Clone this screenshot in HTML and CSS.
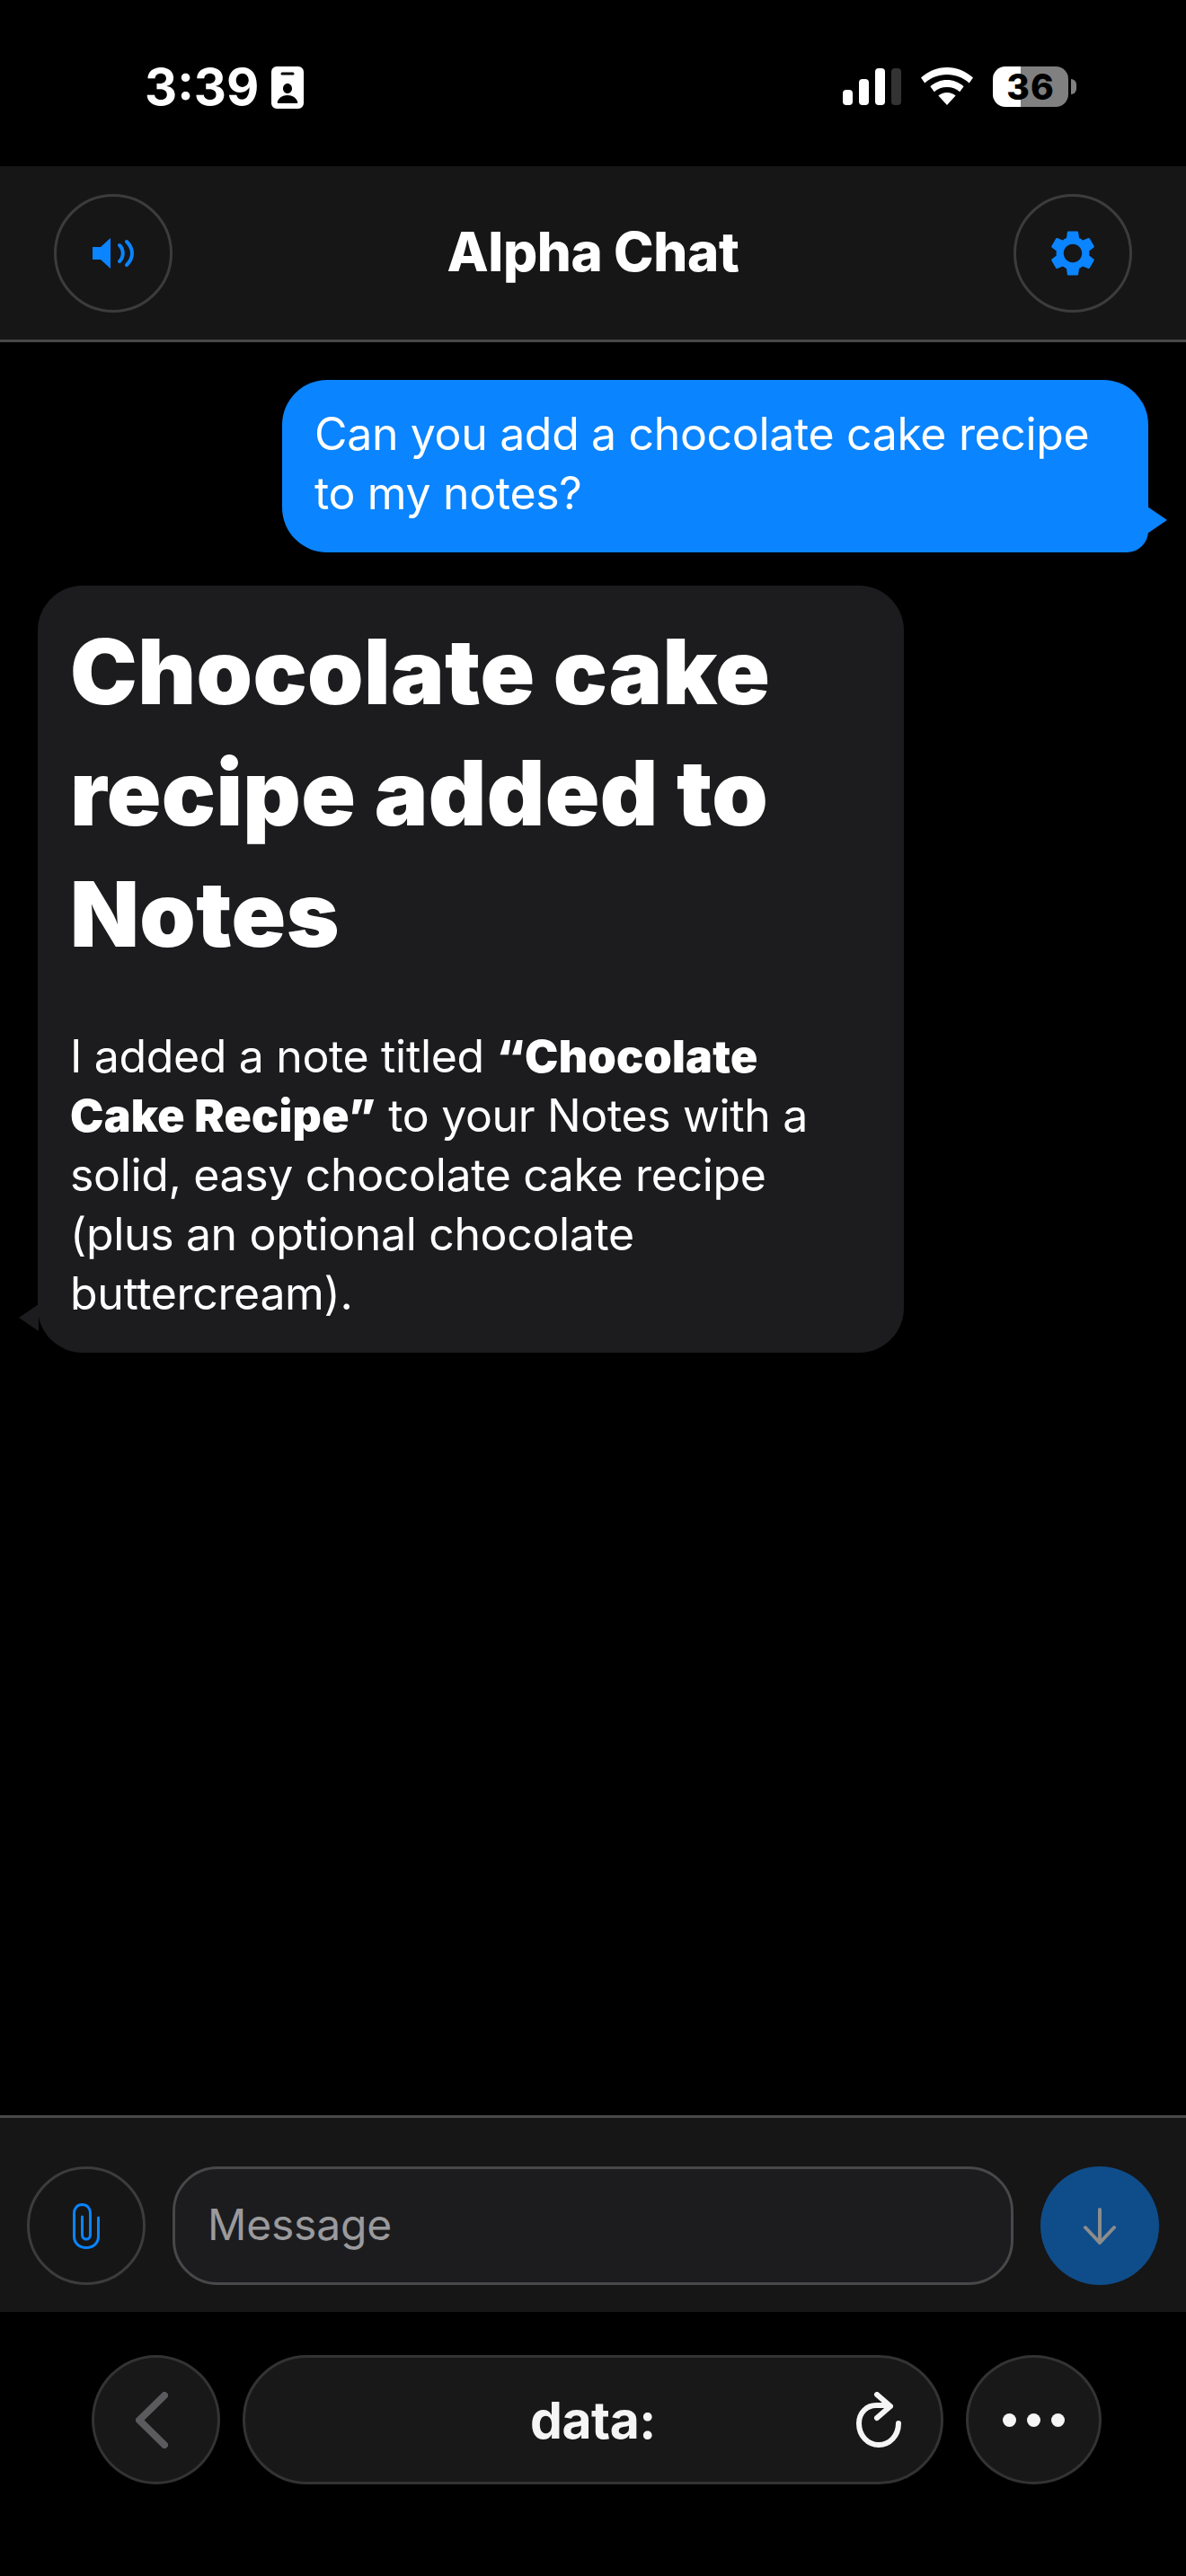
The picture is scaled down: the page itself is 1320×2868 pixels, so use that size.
FILE: index.html
```html
<!DOCTYPE html>
<html>
<head>
	<title>Alpha Chat</title>
	<meta charset="utf-8">
	<link rel="stylesheet" href="styles.css">
</head>
<body>
    <div class="status-bar">
        <div class="status-left">
            <span class="clock">3:39</span>
            <svg class="id-icon" viewBox="0 0 36 47">
                <path fill-rule="evenodd" fill="#fff" d="M6 0h24a6 6 0 0 1 6 6v35a6 6 0 0 1-6 6H6a6 6 0 0 1-6-6V6a6 6 0 0 1 6-6zM12 6.500a1.500 1.500 0 0 0 0 3h12a1.500 1.500 0 0 0 0-3zM18 19c-3 0-5 2.500-5 5.500s2 5.500 5 5.500 5-2.500 5-5.500-2-5.500-5-5.500zM8 41h20c1 0 1.500-.6 1.300-1.500C28 35 23.500 32 18 32S8 35 6.700 39.500C6.500 40.400 7 41 8 41z"/>
            </svg>
        </div>
        <div class="status-right">
            <div class="signal">
                <span class="bar bar-1"></span>
                <span class="bar bar-2"></span>
                <span class="bar bar-3"></span>
                <span class="bar bar-4"></span>
            </div>
            <svg class="wifi-icon" viewBox="0 0 58 42">
                <path fill="#fff" d="M29 0c11 0 21 4.300 29 11.500l-4.300 6C47 11.500 38.500 8 29 8S11 11.500 4.300 17.500L0 11.500C8 4.300 18 0 29 0z"/>
                <path fill="#fff" d="M29 14c7 0 13.500 2.700 18.600 7.200l-4.400 6C39.400 23.900 34.500 22 29 22s-10.400 1.900-14.200 5.200l-4.400-6C15.500 16.700 22 14 29 14z"/>
                <path fill="#fff" d="M29 28c3.700 0 7 1.300 9.600 3.500L29 42l-9.600-10.500C22 29.300 25.300 28 29 28z"/>
            </svg>
            <div class="battery">
                <div class="battery-body"><span class="battery-level">36</span></div>
                <span class="battery-nub"></span>
            </div>
        </div>
    </div>

    <header class="app-header">
        <button class="round-btn">
            <svg class="speaker-icon" viewBox="0 0 46 34">
                <path fill="#0a84ff" d="M20 0v34L9 24H0V10h9z"/>
                <path fill="none" stroke="#0a84ff" stroke-width="4" stroke-linecap="round" d="M30 8c5 5 5 13 0 18"/>
                <path fill="none" stroke="#0a84ff" stroke-width="4" stroke-linecap="round" d="M38 4c8 8 8 18 0 26"/>
            </svg>
        </button>
        <h1 class="app-title">Alpha Chat</h1>
        <button class="round-btn">
            <svg class="gear-icon" viewBox="2.600 2 18.800 20">
                <path fill="#0a84ff" fill-rule="evenodd" d="M19.140 12.940c.04-.3.06-.61.06-.94 0-.32-.02-.64-.07-.94l2.030-1.580c.18-.14.23-.41.12-.61l-1.920-3.320c-.12-.22-.37-.29-.59-.22l-2.390.96c-.5-.38-1.030-.7-1.620-.94l-.36-2.540c-.04-.24-.24-.41-.48-.41h-3.840c-.24 0-.43.17-.47.41l-.36 2.540c-.59.24-1.130.57-1.620.94l-2.390-.96c-.22-.08-.47 0-.59.22L2.740 8.870c-.12.21-.08.47.12.61l2.030 1.580c-.05.3-.09.63-.09.94s.02.64.07.94l-2.030 1.580c-.18.14-.23.41-.12.61l1.920 3.320c.12.22.37.29.59.22l2.390-.96c.5.38 1.030.7 1.620.94l.36 2.540c.05.24.24.41.48.41h3.840c.24 0 .44-.17.47-.41l.36-2.540c.59-.24 1.130-.56 1.620-.94l2.390.96c.22.08.47 0 .59-.22l1.920-3.320c.12-.22.07-.47-.12-.61l-2.010-1.580zM12 16c-2.200 0-4-1.800-4-4s1.800-4 4-4 4 1.800 4 4-1.800 4-4 4z"/>
            </svg>
        </button>
    </header>

    <main class="messages">
        <div class="bubble bubble-user">Can you add a chocolate cake recipe to my notes?</div>
        <div class="bubble bubble-bot">
            <h2 class="reply-title">Chocolate cake recipe added to Notes</h2>
            <p class="reply-text">I added a note titled <strong>“Chocolate Cake Recipe”</strong> to your Notes with a solid, easy chocolate cake recipe (plus an optional chocolate buttercream).</p>
        </div>
    </main>

    <footer class="composer">
        <button class="round-btn">
            <svg class="clip-icon" viewBox="0 0 30 51">
                <path fill="none" stroke="#0a84ff" stroke-width="3" stroke-linecap="round" d="M28.500 16v21c0 7.500-6 12.500-13.500 12.500S1.500 44.500 1.500 37V11C1.500 5.500 5 1.500 10.500 1.500S19.500 5.500 19.500 11v24c0 3-2 5-4.500 5s-4.500-2-4.500-5V15"/>
            </svg>
        </button>
        <div class="message-input">Message</div>
        <button class="send-btn">
            <svg class="arrow-icon" viewBox="0 0 36 41">
                <path fill="none" stroke="#8c8c8c" stroke-width="4" stroke-linecap="round" stroke-linejoin="round" d="M18 2v37M2 22l16 17 16-17" />
            </svg>
        </button>
    </footer>

    <nav class="browser-bar">
        <button class="nav-btn nav-back">
            <svg class="back-icon" viewBox="0 0 36 63">
                <path fill="none" stroke="#5b5b5d" stroke-width="8" stroke-linecap="round" stroke-linejoin="round" d="M32 4L4 31.500 32 59"/>
            </svg>
        </button>
        <div class="url-pill">
            <span class="url-text">data:</span>
            <svg class="reload-icon" viewBox="0 0 52 62">
                <path fill="none" stroke="#f5f5f5" stroke-width="6" stroke-linecap="round" stroke-linejoin="round" d="M48 35c0 14-10 24-22 24S4 49 4 35c0-12 9-20 19-20h12"/>
                <path fill="none" stroke="#f5f5f5" stroke-width="6" stroke-linecap="round" stroke-linejoin="round" d="M24 3l15 13-15 13"/>
            </svg>
        </div>
        <button class="nav-btn nav-more">
            <span class="dot"></span><span class="dot"></span><span class="dot"></span>
        </button>
    </nav>
</body>
</html>
```

FILE: styles.css
```css
* {
    box-sizing: border-box;
}
html, body {
    margin: 0;
    height: 100%;
}
body {
    background-color: #000;
    color: #fff;
    font-family: "Inter", "Liberation Sans", sans-serif;
    display: flex;
    flex-direction: column;
    height: 100vh;
    overflow: hidden;
}
button {
    font: inherit;
    padding: 0;
    cursor: pointer;
}

/* status bar */
.status-bar {
    height: 185px;
    flex: none;
    display: flex;
    justify-content: space-between;
    align-items: flex-start;
    padding: 74px 122px 0 161px;
}
.status-left {
    display: flex;
    align-items: center;
    gap: 14px;
}
.clock {
    font-size: 56px;
    font-weight: 700;
    line-height: 47px;
}
.id-icon {
    width: 36px;
    height: 47px;
}
.status-right {
    display: flex;
    align-items: flex-start;
    gap: 22px;
}
.signal {
    display: flex;
    align-items: flex-end;
    gap: 7px;
    height: 41px;
    margin-top: 2px;
}
.bar {
    width: 11px;
    border-radius: 4px;
    background-color: #fff;
}
.bar-1 { height: 17px; }
.bar-2 { height: 29px; }
.bar-3 { height: 41px; }
.bar-4 { height: 41px; background-color: #333; }
.wifi-icon {
    width: 58px;
    height: 42px;
    margin-top: 1px;
}
.battery {
    display: flex;
    align-items: center;
    gap: 3px;
}
.battery-body {
    width: 84px;
    height: 45px;
    border-radius: 14px;
    background: linear-gradient(to right, #fff 37%, #808080 37%);
    display: flex;
    align-items: center;
    justify-content: center;
}
.battery-level {
    color: #000;
    font-size: 39px;
    font-weight: 800;
    letter-spacing: 1px;
}
.battery-nub {
    width: 6px;
    height: 17px;
    border-radius: 0 6px 6px 0;
    background-color: #808080;
}

/* header */
.app-header {
    flex: none;
    height: 196px;
    padding: 0 60px;
    background-color: #161616;
    border-bottom: 3px solid #48484a;
    display: flex;
    align-items: center;
    justify-content: space-between;
}
.round-btn {
    width: 132px;
    height: 132px;
    flex: none;
    border-radius: 50%;
    border: 3px solid #3c3c3e;
    background: transparent;
    display: flex;
    align-items: center;
    justify-content: center;
}
.app-title {
    margin: 0 0 4px;
    font-size: 60px;
    font-weight: 800;
    letter-spacing: -.4px;
}
.speaker-icon {
    width: 46px;
    height: 34px;
}
.gear-icon {
    width: 48px;
    height: 52px;
}
.clip-icon {
    width: 30px;
    height: 51px;
}

/* messages */
.messages {
    flex: 1;
    padding: 42px 42px 0;
    display: flex;
    flex-direction: column;
    gap: 37px;
}
.bubble {
    position: relative;
    font-size: 50px;
    line-height: 66px;
    letter-spacing: -.35px;
}
.bubble::after {
    content: "";
    position: absolute;
    width: 22px;
    height: 30px;
}
.bubble-user {
    align-self: flex-end;
    width: 964px;
    padding: 27px 36px 33px;
    background-color: #0a84ff;
    border-radius: 50px 50px 24px 50px;
}
.bubble-user::after {
    right: -21px;
    bottom: 21px;
    background-color: #0a84ff;
    clip-path: polygon(0 0, 100% 50%, 0 100%);
}
.bubble-bot {
    align-self: flex-start;
    width: 964px;
    padding: 28px 37px 33px 36px;
    background-color: #1c1c1e;
    border-radius: 50px;
}
.bubble-bot::after {
    left: -21px;
    bottom: 24px;
    background-color: #1c1c1e;
    clip-path: polygon(100% 0, 0 50%, 100% 100%);
}
.reply-title {
    margin: 0 0 58px;
    font-size: 100px;
    font-weight: 900;
    line-height: 135px;
    letter-spacing: .4px;
}
.reply-text {
    margin: 0;
}
.reply-text strong {
    font-weight: 900;
    letter-spacing: .3px;
}

/* composer */
.composer {
    flex: none;
    height: 219px;
    padding: 54px 30px 0;
    background-color: #161616;
    border-top: 3px solid #48484a;
    display: flex;
    align-items: flex-start;
    gap: 30px;
}
.message-input {
    flex: 1;
    height: 132px;
    padding-left: 36px;
    padding-bottom: 3px;
    border: 3px solid #48484a;
    border-radius: 50px;
    background-color: #1c1c1e;
    color: #9a9a9c;
    font-size: 48px;
    letter-spacing: -.2px;
    display: flex;
    align-items: center;
}
.send-btn {
    width: 132px;
    height: 132px;
    flex: none;
    border: none;
    border-radius: 50%;
    background-color: #0f4d8a;
    display: flex;
    align-items: center;
    justify-content: center;
}
.arrow-icon {
    width: 36px;
    height: 41px;
}

/* browser bar */
.browser-bar {
    flex: none;
    height: 294px;
    padding: 48px 94px 0 102px;
    display: flex;
    align-items: flex-start;
    gap: 25px;
}
.nav-btn {
    height: 144px;
    flex: none;
    border-radius: 50%;
    border: 3px solid #333;
    background-color: #181818;
    display: flex;
    align-items: center;
    justify-content: center;
}
.nav-back {
    width: 143px;
}
.back-icon {
    width: 36px;
    height: 63px;
    margin-right: 10px;
}
.nav-more {
    width: 151px;
    gap: 12px;
}
.dot {
    width: 15px;
    height: 15px;
    border-radius: 50%;
    background-color: #f5f5f5;
}
.url-pill {
    flex: 1;
    height: 144px;
    border-radius: 72px;
    border: 3px solid #333;
    background-color: #181818;
    padding: 0 43px;
    display: grid;
    grid-template-columns: 52px 1fr 52px;
    align-items: center;
}
.url-text {
    grid-column: 2;
    text-align: center;
    font-size: 57px;
    font-weight: 700;
    letter-spacing: -.5px;
    color: #f5f5f5;
}
.reload-icon {
    grid-column: 3;
    width: 52px;
    height: 62px;
}
```
